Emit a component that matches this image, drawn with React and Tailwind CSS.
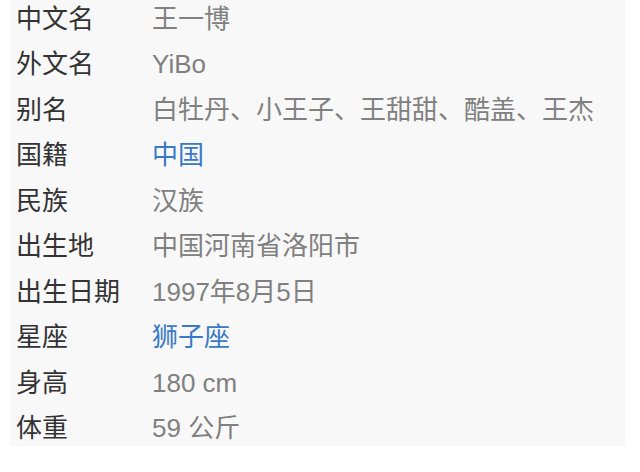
const rows = [
  { label: '中文名', value: '王一博' },
  { label: '外文名', value: 'YiBo' },
  { label: '别名', value: '白牡丹、小王子、王甜甜、酷盖、王杰' },
  { label: '国籍', value: '中国', link: true },
  { label: '民族', value: '汉族' },
  { label: '出生地', value: '中国河南省洛阳市' },
  { label: '出生日期', value: '1997年8月5日' },
  { label: '星座', value: '狮子座', link: true },
  { label: '身高', value: '180 cm' },
  { label: '体重', value: '59 公斤' },
];

export default function App() {
  return (
    <div
      className="w-[640px] h-[472px] bg-white overflow-hidden"
      style={{ fontFamily: '"Liberation Sans", "Noto Sans CJK SC", sans-serif' }}
    >
      <div className="ml-[10px] w-[615px] h-[450px] bg-[#f8f8f8] pl-[6px]">
        <div className="-mt-[4px]">
          {rows.map((row, i) => (
            <div key={i} className="flex items-center h-[45.5px] text-[26px] leading-none">
              <div className="w-[136px] shrink-0 text-[#333333]">{row.label}</div>
              <div className={row.link ? 'text-[#3a78c8]' : 'text-[#808080]'}>{row.value}</div>
            </div>
          ))}
        </div>
      </div>
    </div>
  );
}
